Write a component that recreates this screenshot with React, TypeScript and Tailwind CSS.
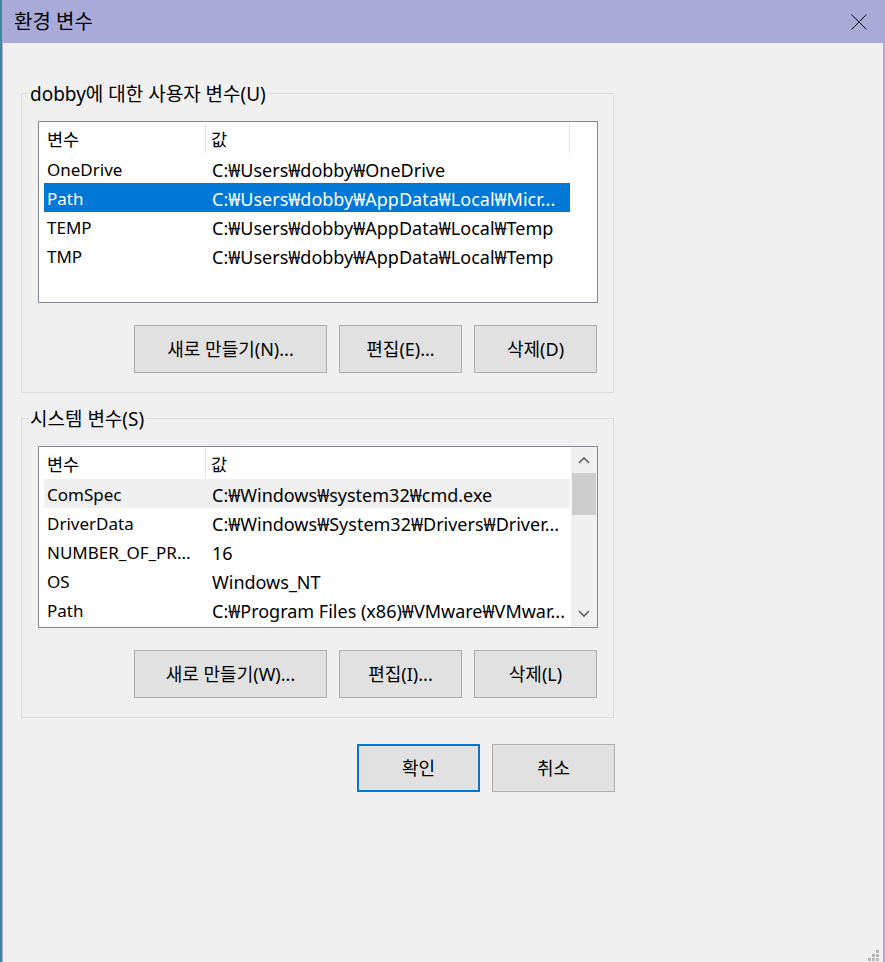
import React from "react";

const FONT = { fontFamily: '"Noto Sans", "Noto Sans CJK KR", sans-serif' };

type Row = { name: string; value: string; state?: "selected" | "hover" };

function ListBox({ rows, scroll }: { rows: Row[]; scroll?: boolean }) {
  return (
    <div className="relative ml-[16px] mt-[27px] h-[182px] w-[560px] overflow-hidden border border-[#828790] bg-white">
      <div className="flex h-full">
        <div className="flex-1 overflow-hidden">
          <div className="relative flex h-[32px] items-center pt-[3px]">
            <div className="ml-[5px] w-[164px] pl-[3px] text-[17.5px]">변수</div>
            <div className="pl-[3px] text-[17.5px]">값</div>
            <div className="absolute left-[166px] top-[1px] h-[30px] w-px bg-[#e5e5e5]" />
            {!scroll && <div className="absolute left-[530px] top-[1px] h-[30px] w-px bg-[#e5e5e5]" />}
          </div>
          {rows.map((r) => (
            <div
              key={r.name}
              className={
                "ml-[5px] flex h-[29px] w-[526px] items-center whitespace-nowrap pt-[3px] " +
                (r.state === "selected"
                  ? "bg-[#0078d7] text-white"
                  : r.state === "hover"
                  ? "bg-[#f0f0f0] text-black"
                  : "text-black")
              }
            >
              <div className="w-[165px] overflow-hidden pl-[3px] text-[17px]">{r.name}</div>
              <div className="overflow-hidden pl-[3px] text-[18px]">{r.value}</div>
            </div>
          ))}
        </div>
        {scroll && (
          <div className="flex w-[26px] flex-col bg-[#f0f0f0]">
            <div className="flex h-[26px] items-center justify-center">
              <svg width="12" height="8" viewBox="0 0 12 8">
                <path d="M1 7 L6 2 L11 7" fill="none" stroke="#606060" strokeWidth="1.6" />
              </svg>
            </div>
            <div className="mx-[1px] h-[42px] bg-[#cdcdcd]" />
            <div className="flex-1" />
            <div className="flex h-[26px] items-center justify-center">
              <svg width="12" height="8" viewBox="0 0 12 8">
                <path d="M1 1 L6 6 L11 1" fill="none" stroke="#606060" strokeWidth="1.6" />
              </svg>
            </div>
          </div>
        )}
      </div>
    </div>
  );
}

function Btn({ w, children, primary }: { w: string; children: React.ReactNode; primary?: boolean }) {
  return (
    <div
      className={
        "flex h-[48px] items-center justify-center bg-[#e1e1e1] text-[18px] text-black " +
        w +
        " " +
        (primary ? "border-2 border-[#0078d7]" : "border border-[#adadad]")
      }
    >
      {children}
    </div>
  );
}

function Group({ label, children }: { label: string; children: React.ReactNode }) {
  return (
    <div className="relative h-[300px] w-[593px] border border-[#dcdcdc]">
      <div className="absolute left-[7px] top-[-12px] bg-[#f0f0f0] px-[1px] text-[19px] leading-[24px] text-black">
        {label}
      </div>
      {children}
    </div>
  );
}

export default function App() {
  const userRows: Row[] = [
    { name: "OneDrive", value: "C:₩Users₩dobby₩OneDrive" },
    { name: "Path", value: "C:₩Users₩dobby₩AppData₩Local₩Micr...", state: "selected" },
    { name: "TEMP", value: "C:₩Users₩dobby₩AppData₩Local₩Temp" },
    { name: "TMP", value: "C:₩Users₩dobby₩AppData₩Local₩Temp" },
  ];
  const sysRows: Row[] = [
    { name: "ComSpec", value: "C:₩Windows₩system32₩cmd.exe", state: "hover" },
    { name: "DriverData", value: "C:₩Windows₩System32₩Drivers₩Driver..." },
    { name: "NUMBER_OF_PR...", value: "16" },
    { name: "OS", value: "Windows_NT" },
    { name: "Path", value: "C:₩Program Files (x86)₩VMware₩VMwar..." },
  ];
  return (
    <div className="flex h-[962px] w-[885px] overflow-hidden bg-[#3b8a9c]" style={FONT}>
      <div className="w-[2px]" />
      <div className="relative flex flex-1 flex-col border-l border-r-2 border-[#a9aad8] bg-[#f0f0f0]">
        <div className="flex h-[43px] items-center justify-between bg-[#a9aad8] pl-[11px] pr-[16px]">
          <div className="text-[20px] text-black">환경 변수</div>
          <svg width="16" height="16" viewBox="0 0 16 16">
            <path d="M0.5 0.5 L15.5 15.5 M15.5 0.5 L0.5 15.5" stroke="#000" strokeWidth="1" />
          </svg>
        </div>
        <div className="flex flex-col pl-[18px] pt-[50px]">
          <Group label="dobby에 대한 사용자 변수(U)">
            <ListBox rows={userRows} />
            <div className="mt-[22px] flex w-[575px] justify-end gap-[12px]">
              <Btn w="w-[193px]">새로 만들기(N)...</Btn>
              <Btn w="w-[123px]">편집(E)...</Btn>
              <Btn w="w-[123px]">삭제(D)</Btn>
            </div>
          </Group>
          <div className="h-[25px]" />
          <Group label="시스템 변수(S)">
            <ListBox rows={sysRows} scroll />
            <div className="mt-[22px] flex w-[575px] justify-end gap-[12px]">
              <Btn w="w-[193px]">새로 만들기(W)...</Btn>
              <Btn w="w-[123px]">편집(I)...</Btn>
              <Btn w="w-[123px]">삭제(L)</Btn>
            </div>
          </Group>
          <div className="mt-[26px] flex w-[594px] justify-end gap-[12px]">
            <Btn w="w-[123px]" primary>
              확인
            </Btn>
            <Btn w="w-[123px]">취소</Btn>
          </div>
        </div>
        <svg className="absolute bottom-0 right-[3px]" width="12" height="12" viewBox="0 0 12 12">
          <rect x="8" y="0" width="3" height="3" fill="#b8b8b8" />
          <rect x="4" y="4" width="3" height="3" fill="#b8b8b8" />
          <rect x="8" y="4" width="3" height="3" fill="#b8b8b8" />
          <rect x="0" y="8" width="3" height="3" fill="#b8b8b8" />
          <rect x="4" y="8" width="3" height="3" fill="#b8b8b8" />
          <rect x="8" y="8" width="3" height="3" fill="#b8b8b8" />
        </svg>
      </div>
    </div>
  );
}
